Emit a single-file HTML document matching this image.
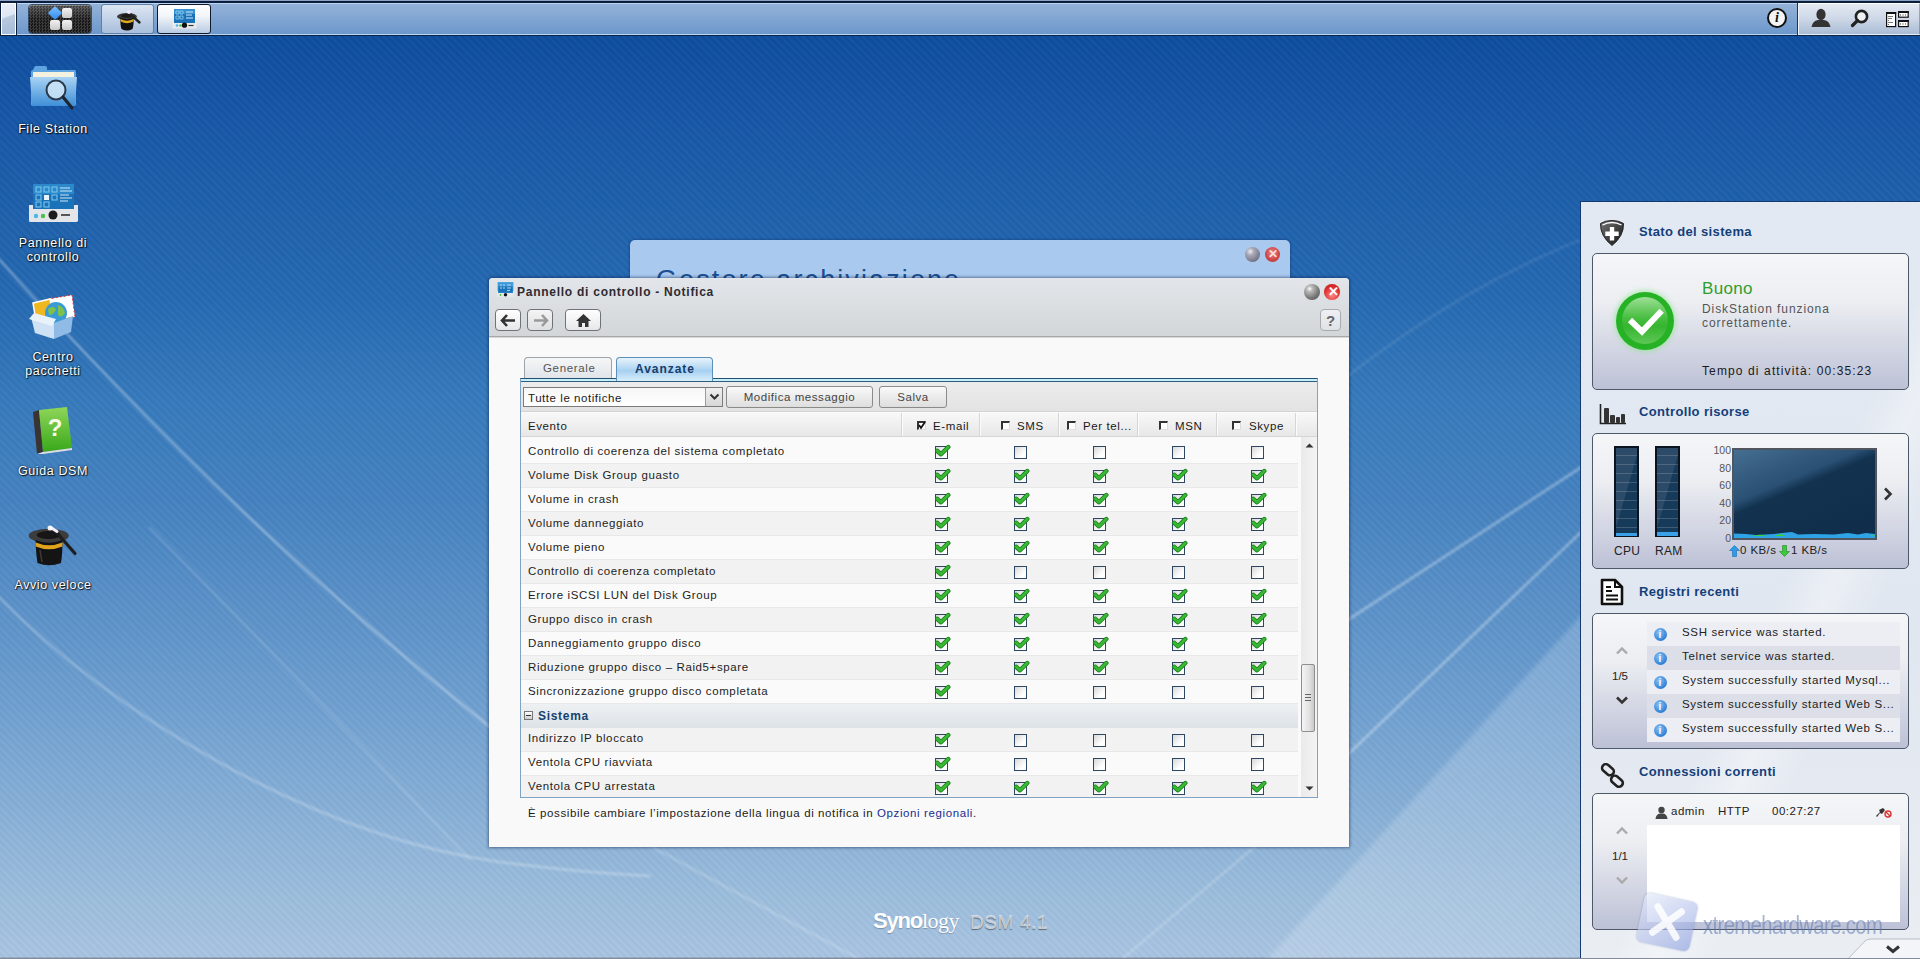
<!DOCTYPE html>
<html><head><meta charset="utf-8">
<style>
*{box-sizing:border-box;margin:0;padding:0}
html,body{width:1920px;height:959px;overflow:hidden}
body{position:relative;font-family:"Liberation Sans",sans-serif;font-size:11px;color:#222;
background:linear-gradient(to bottom,#0b4796 0px,#0d4e9e 36px,#1555a5 100px,#266ab2 300px,#367abc 400px,#4582c0 500px,#6e9fd0 700px,#9dbedd 900px,#a8c4e2 957px,#8390a8 958px);}
.abs{position:absolute}
.stripes{position:absolute;left:0;top:36px;width:1920px;height:923px;
background:repeating-linear-gradient(45deg,rgba(255,255,255,0.03) 0px,rgba(255,255,255,0.02) 2px,rgba(0,0,0,0.02) 3px,rgba(0,0,0,0.028) 5.3px)}
.t{position:absolute;white-space:nowrap}
/* taskbar */
.taskbar{position:absolute;left:0;top:0;width:1920px;height:36px;
background:linear-gradient(to bottom,#8ea3c3 0,#8ea3c3 1px,#0b1e3c 1px,#0b1e3c 3px,#bcd6f5 3px,#bcd6f5 4px,#94b2d8 4px,#6d98cc 34px,#b8d4f2 34px,#b8d4f2 35px,#0b2447 35px,#0b2447 36px)}
.dicon .lbl{position:absolute;left:0;width:104px;text-align:center;color:#fff;font-size:12.5px;line-height:14px;
text-shadow:0 0 2px #000,1px 1px 1px rgba(0,0,0,.8)}
/* dialog */
.dlg{position:absolute;left:489px;top:278px;width:860px;height:569px;border-radius:4px 4px 0 0;
box-shadow:0 0 3px 1px rgba(0,20,60,.45);background:#f9f9f9;overflow:hidden}
.dlg .hdr{position:absolute;left:0;top:0;width:860px;height:59px;background:linear-gradient(to bottom,#e2e6ea,#d2d6d9);border-bottom:1px solid #a8a8a8;box-shadow:0 1px 0 #d8d8d8}
.btn{position:absolute;border:1px solid #6f7378;border-radius:4px;background:linear-gradient(to bottom,#ffffff,#e6e7e9)}
.row{position:absolute;left:0;width:776px;height:24px;border-bottom:1px solid #e9e9e9}
.row .ev{position:absolute;left:7px;top:6px;font-size:11.5px;letter-spacing:0.62px;color:#1d1d1d}
.cb{position:absolute;top:6px;width:13px;height:13px;border:1.4px solid #2e4762;background:linear-gradient(135deg,#d8d8d8,#ffffff 70%)}
.ck{position:absolute;top:3px;width:17px;height:15px}
/* panel */
.panel{position:absolute;left:1580px;top:201px;width:340px;height:758px;background:linear-gradient(to bottom,#e3e9f2,#e1e7f0 60%,#eaeef3);border-left:1px solid #143a70;border-top:1px solid #143a70}
.wbox{position:absolute;left:11px;width:317px;border:1px solid #4d5868;border-radius:5px;background:linear-gradient(to bottom,#f5f6f8 0%,#eceef2 35%,#bdc1d6 100%)}
.whd{position:absolute;left:58px;font-weight:bold;font-size:13px;color:#143f7a;letter-spacing:0.35px}
</style></head><body>
<div class="stripes"></div>
<svg class="abs" style="left:0;top:0" width="1920" height="959" viewBox="0 0 1920 959">
<defs><filter id="bl" x="-5%" y="-5%" width="110%" height="110%"><feGaussianBlur stdDeviation="0.9"/></filter>
<filter id="bl2" x="-10%" y="-10%" width="120%" height="120%"><feGaussianBlur stdDeviation="2"/></filter>
<linearGradient id="lg1" x1="0" y1="0" x2="1" y2="1"><stop offset="0" stop-color="#fff" stop-opacity="0.22"/><stop offset="1" stop-color="#fff" stop-opacity="0.12"/></linearGradient></defs>
<path d="M1262,965 L1580,617 L1600,600 L1600,965 Z" fill="url(#lg1)" filter="url(#bl2)"/>
<g fill="none" stroke="#ffffff" stroke-linecap="round" filter="url(#bl)">
<path d="M-10,249 Q228,518 490,727 L530,760" stroke-width="2.6" stroke-opacity="0.34"/>
<path d="M150,528 Q300,680 470,860" stroke-width="2.5" stroke-opacity="0.13"/>
<path d="M-5,593 C110,712 310,836 500,862 C560,870 610,874 650,876" stroke-width="2.6" stroke-opacity="0.26"/>
<path d="M620,828 L656,849 L870,965" stroke-width="2.4" stroke-opacity="0.2"/>
<path d="M1340,625 L1577,470 L1600,455" stroke-width="2.8" stroke-opacity="0.32"/>
<path d="M1340,762 L1577,536 L1600,514" stroke-width="2.8" stroke-opacity="0.32"/>
<path d="M1345,378 C1420,320 1500,270 1600,232" stroke-width="2.4" stroke-opacity="0.1"/>
<path d="M1290,818 L1252,849 L1115,965" stroke-width="2.4" stroke-opacity="0.2"/>
</g>
</svg>
<div class="taskbar">
 <div class="abs" style="left:0;top:2px;width:17px;height:34px;background:#0b1e3c"></div>
 <div class="abs" style="left:1px;top:3px;width:15px;height:32px;border:1px solid #fff;background:linear-gradient(160deg,#e9eef6 0%,#dfe7f2 40%,#b8c8de 45%,#a6bbd8 100%)"></div>
 <div class="abs" style="left:28px;top:4px;width:64px;height:30px;border-radius:4px;border:1px solid #3b4f6a;background:repeating-conic-gradient(#3a3a3a 0 25%,#151515 0 50%) 0 0/3px 3px;box-shadow:inset 0 1px 0 rgba(255,255,255,.25)">
  <div class="abs" style="left:0;top:0;width:62px;height:14px;background:linear-gradient(to bottom,rgba(255,255,255,.22),rgba(255,255,255,0))"></div>
  <div class="abs" style="left:21px;top:3px;width:10px;height:10px;transform:rotate(45deg);background:linear-gradient(135deg,#7cc0ff,#2f8af0);border-radius:1px"></div>
  <div class="abs" style="left:33px;top:3px;width:10px;height:10px;border-radius:2px;background:linear-gradient(#f2f2f2,#c9c9c9)"></div>
  <div class="abs" style="left:21px;top:15px;width:10px;height:10px;border-radius:2px;background:linear-gradient(#f2f2f2,#c9c9c9)"></div>
  <div class="abs" style="left:33px;top:15px;width:10px;height:10px;border-radius:2px;background:linear-gradient(#f2f2f2,#c9c9c9)"></div>
 </div>
 <div class="abs" style="left:101px;top:4px;width:53px;height:30px;border-radius:3px;border:1px solid #5e7fa8;background:linear-gradient(to bottom,#dce6f2,#a9bfdc)">
  <svg class="abs" style="left:14px;top:3px" width="26" height="24" viewBox="0 0 26 24">
   <ellipse cx="11" cy="8.5" rx="10" ry="3.6" fill="#3a3a3a"/>
   <ellipse cx="11" cy="7.8" rx="6" ry="2" fill="#1a1a1a"/>
   <path d="M4.5,9.5 Q4,17 5.5,21 Q11,24 16.5,21 Q18,17 17.5,9.5 Q11,13 4.5,9.5 Z" fill="#111"/>
   <path d="M4.6,11 Q11,14.5 17.4,11 L17.3,13.5 Q11,17 4.7,13.5 Z" fill="#e0a820"/>
   <path d="M13,5 L23.5,14.5" stroke="#222" stroke-width="2.4" stroke-linecap="round"/>
   <circle cx="13" cy="4" r="2" fill="#f3e9ff"/>
  </svg>
 </div>
 <div class="abs" style="left:157px;top:4px;width:54px;height:30px;border-radius:3px;border:1px solid #0e1a2c;background:linear-gradient(to bottom,#ffffff 0%,#f2f5f9 40%,#b9cbe3 100%)">
  <svg class="abs" style="left:14px;top:3px" width="25" height="22" viewBox="0 0 25 22">
   <rect x="2" y="1" width="21" height="14" fill="#1a73b8"/>
   <rect x="2" y="1" width="21" height="5" fill="#4aa2e0" fill-opacity=".6"/>
   <path d="M4,3 h3 v3 h-3 Z M8,3 h3 v3 h-3 Z M4,8 h3 v3 h-3 Z M8,8 h3 v3 h-3 Z" fill="none" stroke="#8fd0f5" stroke-width=".8"/>
   <path d="M14,4 h7 M14,7 h6 M14,10 h7" stroke="#cfe8f8" stroke-width="1"/>
   <path d="M0.5,13 L2,13 L2,15 L23,15 L23,13 L24.5,13 L24.5,20.5 L0.5,20.5 Z" fill="#e9eaec"/>
   <circle cx="5" cy="17.5" r="1.3" fill="#49b7ea"/><circle cx="8.5" cy="17.5" r="1.3" fill="#4cc04c"/>
   <circle cx="12.5" cy="17.2" r="2.6" fill="#111"/>
   <path d="M16.5,17.5 h5" stroke="#333" stroke-width="1.2"/>
  </svg>
 </div>
 <!-- info -->
 <div class="abs" style="left:1767px;top:8px;width:20px;height:20px;border-radius:50%;border:2.5px solid #111;background:#f4f4f4;text-align:center;font:italic bold 14px/15px 'Liberation Serif',serif;color:#111">i</div>
 <div class="abs" style="left:1797px;top:3px;width:1px;height:32px;background:#1c3558"></div>
 <div class="abs" style="left:1798px;top:3px;width:121px;height:32px;border-top:1px solid #fff;border-bottom:1px solid #e8eef7;border-left:1px solid #f0f4fa;background:linear-gradient(to bottom,#e3e9f2,#cdd7e6 50%,#a9bcd6)">
 </div>
 <svg class="abs" style="left:1810px;top:8px" width="22" height="20" viewBox="0 0 22 20">
  <ellipse cx="11" cy="6.5" rx="4.6" ry="5.8" fill="#333"/>
  <path d="M1.5,19 Q2.5,13 8,12 L14,12 Q19.5,13 20.5,19 Z" fill="#333"/>
 </svg>
 <svg class="abs" style="left:1850px;top:9px" width="20" height="20" viewBox="0 0 20 20">
  <circle cx="11.5" cy="7.5" r="5.6" fill="#eef2f7" stroke="#222" stroke-width="2.6"/>
  <path d="M7.5,11.5 L2.5,16.5" stroke="#222" stroke-width="3.2" stroke-linecap="round"/>
 </svg>
 <svg class="abs" style="left:1885px;top:10px" width="24" height="18" viewBox="0 0 24 18">
  <rect x="1.6" y="2.6" width="9" height="14" fill="#fff" stroke="#111" stroke-width="1.2"/>
  <rect x="1" y="2" width="10.2" height="2" fill="#111"/>
  <path d="M3,6.5 h5 M3,8.5 h4 M3,10.5 h1 M3,12.5 h5 M3,14.5 h1" stroke="#555" stroke-width=".8"/>
  <rect x="13.6" y="1.6" width="9.6" height="5.6" fill="#fff" stroke="#111" stroke-width="1.2"/>
  <rect x="13.6" y="10.6" width="9.6" height="6" fill="#fff" stroke="#111" stroke-width="1.2"/>
  <rect x="13" y="1" width="10.8" height="2" fill="#111"/><rect x="13" y="10" width="10.8" height="2" fill="#111"/>
  <path d="M15,5 h1 M17.5,5 h1 M20,5 h1 M15,14 h1 M17.5,14 h1 M20,14 h1" stroke="#333" stroke-width="1"/>
 </svg>
</div>
<div class="dicon">
 <!-- File Station -->
 <svg class="abs" style="left:28px;top:64px" width="52" height="48" viewBox="0 0 52 48">
  <defs><linearGradient id="fold" x1="0" y1="0" x2="0" y2="1"><stop offset="0" stop-color="#a9d3f5"/><stop offset="1" stop-color="#3f8fd6"/></linearGradient></defs>
  <path d="M6,4 Q6,2 8,2 L17,2 Q19,2 19,4 L19,6 L47,6 Q48,6 48,8 L48,40 Q48,42 46,42 L5,42 Q3,42 3,40 L3,8 Q3,6 5,6 Z" fill="#5fa3e0"/>
  <rect x="5" y="8" width="41" height="6" fill="#f4f1de"/>
  <path d="M2,13 L49,13 L47,42 L4,42 Z" fill="url(#fold)"/>
  <circle cx="28" cy="26" r="9.5" fill="#cfe6f7" fill-opacity="0.85" stroke="#2b3a4a" stroke-width="2"/>
  <path d="M35,33 L44,44" stroke="#1d2630" stroke-width="3.2" stroke-linecap="round"/>
 </svg>
 <div class="lbl t" style="left:1px;top:122px;letter-spacing:0.6px">File Station</div>
 <!-- Pannello -->
 <svg class="abs" style="left:28px;top:183px" width="50" height="40" viewBox="0 0 50 40">
  <rect x="5" y="1" width="41" height="28" fill="#1a73b8"/>
  <rect x="5" y="1" width="41" height="10" fill="#3796d6" fill-opacity=".6"/>
  <g fill="none" stroke="#7fcaf0" stroke-width="1"><rect x="8" y="4" width="5" height="5"/><rect x="16" y="4" width="5" height="5"/><rect x="24" y="4" width="5" height="5"/><rect x="8" y="12" width="5" height="5"/><rect x="24" y="12" width="5" height="5"/><rect x="8" y="19" width="5" height="5"/><rect x="16" y="19" width="5" height="5"/></g>
  <rect x="16" y="12" width="5" height="5" fill="#e8f4fb"/>
  <path d="M32,5 h10 M32,8 h12 M32,12 h9 M32,15 h12 M32,18 h8" stroke="#cfe8f8" stroke-width="1.2"/>
  <path d="M1,22 L5,22 L5,26 L46,26 L46,22 L50,22 L50,38 Q50,39 48,39 L3,39 Q1,39 1,38 Z" fill="#e3e5e8"/>
  <circle cx="8" cy="33" r="2.2" fill="#49b7ea"/><circle cx="15" cy="33" r="2.2" fill="#4cc04c"/>
  <circle cx="25" cy="32" r="4.5" fill="#1b1b1b"/>
  <path d="M33,32 h9" stroke="#333" stroke-width="1.6"/>
 </svg>
 <div class="lbl t" style="left:1px;top:236px;letter-spacing:0.6px">Pannello di</div>
 <div class="lbl t" style="left:1px;top:250px;letter-spacing:0.6px">controllo</div>
 <!-- Centro pacchetti -->
 <svg class="abs" style="left:28px;top:293px" width="50" height="48" viewBox="0 0 50 48">
  <path d="M20,6 L44,2 L47,24 L23,28 Z" fill="#fff" stroke="#d33" stroke-width="1" stroke-dasharray="2 2"/>
  <path d="M5,10 L22,6 L26,30 L9,34 Z" fill="#f0b820" stroke="#fff" stroke-width="1.5"/>
  <circle cx="28" cy="20" r="11" fill="#3a9ad6"/>
  <path d="M20,16 Q25,12 28,16 Q26,22 21,22 Z M30,12 Q36,14 37,20 Q33,26 30,22 Z" fill="#7cc24a"/>
  <path d="M3,24 L26,30 L26,46 L7,40 Z" fill="#cfe2f5"/>
  <path d="M26,30 L45,23 L43,39 L26,46 Z" fill="#8fbbe6"/>
  <path d="M1,26 L24,33 L28,26 L6,20 Z" fill="#e9f2fb"/>
 </svg>
 <div class="lbl t" style="left:1px;top:350px;letter-spacing:0.6px">Centro</div>
 <div class="lbl t" style="left:1px;top:364px;letter-spacing:0.6px">pacchetti</div>
 <!-- Guida DSM -->
 <svg class="abs" style="left:31px;top:406px" width="44" height="50" viewBox="0 0 44 50">
  <defs><linearGradient id="grn" x1="0" y1="0" x2="0" y2="1"><stop offset="0" stop-color="#8fd65a"/><stop offset="1" stop-color="#38a818"/></linearGradient></defs>
  <path d="M2,6 L8,4 L12,46 L6,48 Z" fill="#3a3331"/>
  <path d="M8,4 L36,1 L41,42 L12,46 Z" fill="url(#grn)"/>
  <path d="M6,48 L12,46 L41,42 L41,44 L12,48 Z" fill="#ddd"/>
  <text x="24" y="30" font-family="Liberation Sans" font-weight="bold" font-size="24" fill="#f6fbe8" text-anchor="middle">?</text>
 </svg>
 <div class="lbl t" style="left:1px;top:464px;letter-spacing:0.6px">Guida DSM</div>
 <!-- Avvio veloce -->
 <svg class="abs" style="left:28px;top:524px" width="50" height="44" viewBox="0 0 50 44">
  <ellipse cx="20.7" cy="11.8" rx="20" ry="7" fill="#3c3c3c"/>
  <ellipse cx="20.7" cy="11" rx="12" ry="4" fill="#161616"/>
  <path d="M7.5,16 Q8,30 9.5,39 Q21,43.5 33,39 Q34.5,30 34.5,16 Q21,21 7.5,16 Z" fill="#141414"/>
  <path d="M7.6,18.5 Q21,24 34.4,18.5 L34.4,22.5 Q21,28 7.7,22.5 Z" fill="#e2a31c"/>
  <path d="M12,26 Q13,33 14,38" stroke="#555" stroke-width="1.5" fill="none" stroke-opacity=".6"/>
  <path d="M26,5.5 L47,29.5" stroke="#1e1e1e" stroke-width="3.2" stroke-linecap="round"/>
  <path d="M23,3.5 L29,7.5" stroke="#f3ecff" stroke-width="3" stroke-linecap="round"/>
  <circle cx="22" cy="4" r="2.5" fill="#fff" fill-opacity=".9"/>
 </svg>
 <div class="lbl t" style="left:1px;top:578px;letter-spacing:0.6px">Avvio veloce</div>
</div>
<!-- back window -->
<div class="abs" style="left:630px;top:240px;width:660px;height:60px;border-radius:5px 5px 0 0;background:#a9c9ee;box-shadow:0 0 3px rgba(0,20,60,.5);overflow:hidden">
 <div class="t" style="left:26px;top:25px;font-size:27px;letter-spacing:2.1px;color:#1b4f90">Gestore archiviazione</div>
 <div class="abs" style="left:615px;top:7px;width:15px;height:15px;border-radius:50%;background:radial-gradient(circle at 35% 30%,#eee 0,#aab 25%,#778 70%,#556 100%)"></div>
 <div class="abs" style="left:635px;top:7px;width:15px;height:15px;border-radius:50%;background:radial-gradient(circle at 50% 40%,#e88 0,#c44 60%,#b33 100%)"><span class="t" style="left:3px;top:0px;font:bold 12px/15px Liberation Sans;color:#fbdede">&#x2715;</span></div>
</div>
<div class="dlg">
 <div class="hdr">
  <svg class="abs" style="left:8px;top:4px" width="17" height="16" viewBox="0 0 17 16"><rect x="1" y="0.5" width="15" height="10.5" fill="#1a73b8" stroke="#3b9ddf" stroke-width=".8"/><rect x="1" y="0.5" width="15" height="4" fill="#5ab0ea" fill-opacity=".6"/><path d="M3,3 h2 M6,3 h2 M3,6 h2 M6,6 h2 M10,3 h4 M10,6 h4 M10,8.5 h3" stroke="#bfe3f8" stroke-width=".9"/><path d="M0,9 L1,9 L1,11 L16,11 L16,9 L17,9 L17,15 L0,15 Z" fill="#e6e7e9"/><circle cx="8.5" cy="12.8" r="1.7" fill="#111"/><circle cx="3.5" cy="13" r=".9" fill="#4cc04c"/></svg>
  <div class="t" style="left:28px;top:7px;font-size:12px;font-weight:bold;letter-spacing:0.74px;color:#2e2a33">Pannello di controllo - Notifica</div>
  <div class="abs" style="left:815px;top:6px;width:16px;height:16px;border-radius:50%;background:radial-gradient(circle at 35% 30%,#fff 0,#bbb 18%,#777 60%,#444 100%)"></div>
  <div class="abs" style="left:835px;top:6px;width:16px;height:16px;border-radius:50%;background:radial-gradient(circle at 50% 70%,#f88 0,#d33 55%,#b11 100%);box-shadow:0 0 1px #f99"><span class="t" style="left:3.5px;top:0px;font:bold 13px/16px Liberation Sans;color:#fff">&#x2715;</span></div>
  <div class="btn" style="left:6px;top:31px;width:26px;height:22px"><svg class="abs" style="left:4px;top:4px" width="17" height="13" viewBox="0 0 17 13"><path d="M7,1 L2,6.5 L7,12 M2.5,6.5 L15,6.5" fill="none" stroke="#333" stroke-width="2.6"/></svg></div>
  <div class="btn" style="left:38px;top:31px;width:26px;height:22px;background:linear-gradient(#f4f4f4,#dedfe1)"><svg class="abs" style="left:4px;top:4px" width="17" height="13" viewBox="0 0 17 13"><path d="M10,1 L15,6.5 L10,12 M14.5,6.5 L2,6.5" fill="none" stroke="#9a9a9a" stroke-width="2.6"/></svg></div>
  <div class="btn" style="left:76px;top:31px;width:36px;height:22px"><svg class="abs" style="left:9px;top:3px" width="17" height="15" viewBox="0 0 17 15"><path d="M8.5,1 L1,8 L3.5,8 L3.5,14 L7,14 L7,10 L10,10 L10,14 L13.5,14 L13.5,8 L16,8 Z" fill="#333"/></svg></div>
  <div class="btn" style="left:831px;top:31px;width:21px;height:22px;border-color:#a8abb0;background:linear-gradient(#eef0f3,#dfe2e6)"><span class="t" style="left:5px;top:2px;font:bold 15px/18px Liberation Sans;color:#666">?</span></div>
 </div>
 <div class="abs" style="left:35px;top:79px;width:88px;height:22px;border:1px solid #9ea3a9;border-bottom:none;border-radius:4px 4px 0 0;background:linear-gradient(#f6f6f6,#dfe4ea)"><span class="t" style="left:18px;top:4px;font-size:11.5px;letter-spacing:0.65px;color:#555">Generale</span></div>
 <div class="abs" style="left:127px;top:79px;width:97px;height:24px;border:1px solid #5b90bb;border-bottom:none;border-radius:4px 4px 0 0;background:linear-gradient(#e8f3fb 0%,#b4d8f3 45%,#a6d0f0 55%,#d9eefc 100%);z-index:2"><span class="t" style="left:18px;top:4px;font-size:12px;font-weight:bold;letter-spacing:0.95px;color:#163d6c">Avanzate</span></div>
 <div class="abs" style="left:31px;top:100px;width:798px;height:420px;border:1px solid #7fa3c0;border-top:1px solid #24506f;background:#fafafa;overflow:hidden">
  <div class="abs" style="left:0;top:0;width:796px;height:2px;background:#c6eefb"></div><div class="abs" style="left:0;top:2px;width:796px;height:1px;background:#2f5d7d"></div>
  <div class="abs" style="left:0;top:3px;width:796px;height:30px;background:linear-gradient(#ececec,#e3e3e3);border-bottom:1px solid #d3d3d3"></div>
  <div class="abs" style="left:2px;top:8px;width:200px;height:20px;border:1px solid #7b7b7b;background:linear-gradient(#f6f6f6,#ffffff)"><span class="t" style="left:4px;top:4px;font-size:11.5px;letter-spacing:0.55px;color:#1a1a1a">Tutte le notifiche</span>
   <div class="abs" style="left:181px;top:0;width:17px;height:18px;border-left:1px solid #9a9a9a;background:linear-gradient(#f0f0f0,#d7d7d7)"><svg class="abs" style="left:3px;top:5px" width="11" height="8" viewBox="0 0 11 8"><path d="M1.5,1.5 L5.5,5.5 L9.5,1.5" fill="none" stroke="#333" stroke-width="2"/></svg></div></div>
  <div class="btn" style="left:205px;top:7px;width:147px;height:22px;border-color:#8a8a8a;border-radius:3px;background:linear-gradient(#f9f9f9,#dedede)"><span class="t" style="left:0;width:145px;text-align:center;top:4px;font-size:11.5px;letter-spacing:0.55px;color:#444">Modifica messaggio</span></div>
  <div class="btn" style="left:358px;top:7px;width:68px;height:22px;border-color:#8a8a8a;border-radius:3px;background:linear-gradient(#f9f9f9,#dedede)"><span class="t" style="left:0;width:66px;text-align:center;top:4px;font-size:11.5px;letter-spacing:0.55px;color:#444">Salva</span></div>
  <div class="abs" style="left:0;top:34px;width:796px;height:24px;background:linear-gradient(#f8f8f8,#e7e7e7);border-bottom:1px solid #d5d5d5"></div>
  <span class="t" style="left:7px;top:41px;font-size:11.5px;letter-spacing:0.6px;color:#1a1a1a">Evento</span>
  <div class="abs" style="left:380px;top:34px;width:1px;height:23px;background:#d6d6d6;box-shadow:1px 0 0 #fbfbfb"></div>
  <div class="abs" style="left:458px;top:34px;width:1px;height:23px;background:#d6d6d6;box-shadow:1px 0 0 #fbfbfb"></div>
  <div class="abs" style="left:537px;top:34px;width:1px;height:23px;background:#d6d6d6;box-shadow:1px 0 0 #fbfbfb"></div>
  <div class="abs" style="left:616px;top:34px;width:1px;height:23px;background:#d6d6d6;box-shadow:1px 0 0 #fbfbfb"></div>
  <div class="abs" style="left:695px;top:34px;width:1px;height:23px;background:#d6d6d6;box-shadow:1px 0 0 #fbfbfb"></div>
  <div class="abs" style="left:774px;top:34px;width:1px;height:23px;background:#d6d6d6;box-shadow:1px 0 0 #fbfbfb"></div>
  <div class="abs" style="left:396px;top:42px;width:9px;height:9px;border-top:2px solid #333;border-left:2px solid #333;border-right:1px solid #ddd;border-bottom:1px solid #ddd;background:#fff"></div>
  <svg class="abs" style="left:396px;top:42px" width="9" height="9" viewBox="0 0 9 9"><path d="M2,4 L4,7 L8,1" fill="none" stroke="#111" stroke-width="1.8"/></svg>
  <span class="t" style="left:412px;top:41px;font-size:11.5px;letter-spacing:0.6px;color:#1a1a1a">E-mail</span>
  <div class="abs" style="left:480px;top:42px;width:9px;height:9px;border-top:2px solid #333;border-left:2px solid #333;border-right:1px solid #ddd;border-bottom:1px solid #ddd;background:#fff"></div>
  <span class="t" style="left:496px;top:41px;font-size:11.5px;letter-spacing:0.6px;color:#1a1a1a">SMS</span>
  <div class="abs" style="left:546px;top:42px;width:9px;height:9px;border-top:2px solid #333;border-left:2px solid #333;border-right:1px solid #ddd;border-bottom:1px solid #ddd;background:#fff"></div>
  <span class="t" style="left:562px;top:41px;font-size:11.5px;letter-spacing:0.6px;color:#1a1a1a">Per tel...</span>
  <div class="abs" style="left:638px;top:42px;width:9px;height:9px;border-top:2px solid #333;border-left:2px solid #333;border-right:1px solid #ddd;border-bottom:1px solid #ddd;background:#fff"></div>
  <span class="t" style="left:654px;top:41px;font-size:11.5px;letter-spacing:0.6px;color:#1a1a1a">MSN</span>
  <div class="abs" style="left:711px;top:42px;width:9px;height:9px;border-top:2px solid #333;border-left:2px solid #333;border-right:1px solid #ddd;border-bottom:1px solid #ddd;background:#fff"></div>
  <span class="t" style="left:728px;top:41px;font-size:11.5px;letter-spacing:0.6px;color:#1a1a1a">Skype</span>
  <div class="abs" style="left:0;top:61px;width:777px;height:24px;background:#fafafa;border-bottom:1px solid #e8e8e8"></div>
  <span class="t" style="left:7px;top:66px;font-size:11.5px;letter-spacing:0.62px;color:#1d1d1d">Controllo di coerenza del sistema completato</span>
  <div class="cb" style="left:414px;top:67px"></div>
  <svg class="abs" style="left:413px;top:65px" width="18" height="15" viewBox="0 0 18 15"><path d="M3.2,6.8 L7,10.3 L14.3,3" fill="none" stroke="#1a7d1a" stroke-width="4.4" stroke-linecap="round" stroke-linejoin="round"/><path d="M3.2,6.8 L7,10.3 L14.3,3" fill="none" stroke="#38b834" stroke-width="2.8" stroke-linecap="round" stroke-linejoin="round"/></svg>
  <div class="cb" style="left:493px;top:67px"></div>
  <div class="cb" style="left:572px;top:67px"></div>
  <div class="cb" style="left:651px;top:67px"></div>
  <div class="cb" style="left:730px;top:67px"></div>
  <div class="abs" style="left:0;top:85px;width:777px;height:24px;background:#f2f2f2;border-bottom:1px solid #e8e8e8"></div>
  <span class="t" style="left:7px;top:90px;font-size:11.5px;letter-spacing:0.62px;color:#1d1d1d">Volume Disk Group guasto</span>
  <div class="cb" style="left:414px;top:91px"></div>
  <svg class="abs" style="left:413px;top:89px" width="18" height="15" viewBox="0 0 18 15"><path d="M3.2,6.8 L7,10.3 L14.3,3" fill="none" stroke="#1a7d1a" stroke-width="4.4" stroke-linecap="round" stroke-linejoin="round"/><path d="M3.2,6.8 L7,10.3 L14.3,3" fill="none" stroke="#38b834" stroke-width="2.8" stroke-linecap="round" stroke-linejoin="round"/></svg>
  <div class="cb" style="left:493px;top:91px"></div>
  <svg class="abs" style="left:492px;top:89px" width="18" height="15" viewBox="0 0 18 15"><path d="M3.2,6.8 L7,10.3 L14.3,3" fill="none" stroke="#1a7d1a" stroke-width="4.4" stroke-linecap="round" stroke-linejoin="round"/><path d="M3.2,6.8 L7,10.3 L14.3,3" fill="none" stroke="#38b834" stroke-width="2.8" stroke-linecap="round" stroke-linejoin="round"/></svg>
  <div class="cb" style="left:572px;top:91px"></div>
  <svg class="abs" style="left:571px;top:89px" width="18" height="15" viewBox="0 0 18 15"><path d="M3.2,6.8 L7,10.3 L14.3,3" fill="none" stroke="#1a7d1a" stroke-width="4.4" stroke-linecap="round" stroke-linejoin="round"/><path d="M3.2,6.8 L7,10.3 L14.3,3" fill="none" stroke="#38b834" stroke-width="2.8" stroke-linecap="round" stroke-linejoin="round"/></svg>
  <div class="cb" style="left:651px;top:91px"></div>
  <svg class="abs" style="left:650px;top:89px" width="18" height="15" viewBox="0 0 18 15"><path d="M3.2,6.8 L7,10.3 L14.3,3" fill="none" stroke="#1a7d1a" stroke-width="4.4" stroke-linecap="round" stroke-linejoin="round"/><path d="M3.2,6.8 L7,10.3 L14.3,3" fill="none" stroke="#38b834" stroke-width="2.8" stroke-linecap="round" stroke-linejoin="round"/></svg>
  <div class="cb" style="left:730px;top:91px"></div>
  <svg class="abs" style="left:729px;top:89px" width="18" height="15" viewBox="0 0 18 15"><path d="M3.2,6.8 L7,10.3 L14.3,3" fill="none" stroke="#1a7d1a" stroke-width="4.4" stroke-linecap="round" stroke-linejoin="round"/><path d="M3.2,6.8 L7,10.3 L14.3,3" fill="none" stroke="#38b834" stroke-width="2.8" stroke-linecap="round" stroke-linejoin="round"/></svg>
  <div class="abs" style="left:0;top:109px;width:777px;height:24px;background:#fafafa;border-bottom:1px solid #e8e8e8"></div>
  <span class="t" style="left:7px;top:114px;font-size:11.5px;letter-spacing:0.62px;color:#1d1d1d">Volume in crash</span>
  <div class="cb" style="left:414px;top:115px"></div>
  <svg class="abs" style="left:413px;top:113px" width="18" height="15" viewBox="0 0 18 15"><path d="M3.2,6.8 L7,10.3 L14.3,3" fill="none" stroke="#1a7d1a" stroke-width="4.4" stroke-linecap="round" stroke-linejoin="round"/><path d="M3.2,6.8 L7,10.3 L14.3,3" fill="none" stroke="#38b834" stroke-width="2.8" stroke-linecap="round" stroke-linejoin="round"/></svg>
  <div class="cb" style="left:493px;top:115px"></div>
  <svg class="abs" style="left:492px;top:113px" width="18" height="15" viewBox="0 0 18 15"><path d="M3.2,6.8 L7,10.3 L14.3,3" fill="none" stroke="#1a7d1a" stroke-width="4.4" stroke-linecap="round" stroke-linejoin="round"/><path d="M3.2,6.8 L7,10.3 L14.3,3" fill="none" stroke="#38b834" stroke-width="2.8" stroke-linecap="round" stroke-linejoin="round"/></svg>
  <div class="cb" style="left:572px;top:115px"></div>
  <svg class="abs" style="left:571px;top:113px" width="18" height="15" viewBox="0 0 18 15"><path d="M3.2,6.8 L7,10.3 L14.3,3" fill="none" stroke="#1a7d1a" stroke-width="4.4" stroke-linecap="round" stroke-linejoin="round"/><path d="M3.2,6.8 L7,10.3 L14.3,3" fill="none" stroke="#38b834" stroke-width="2.8" stroke-linecap="round" stroke-linejoin="round"/></svg>
  <div class="cb" style="left:651px;top:115px"></div>
  <svg class="abs" style="left:650px;top:113px" width="18" height="15" viewBox="0 0 18 15"><path d="M3.2,6.8 L7,10.3 L14.3,3" fill="none" stroke="#1a7d1a" stroke-width="4.4" stroke-linecap="round" stroke-linejoin="round"/><path d="M3.2,6.8 L7,10.3 L14.3,3" fill="none" stroke="#38b834" stroke-width="2.8" stroke-linecap="round" stroke-linejoin="round"/></svg>
  <div class="cb" style="left:730px;top:115px"></div>
  <svg class="abs" style="left:729px;top:113px" width="18" height="15" viewBox="0 0 18 15"><path d="M3.2,6.8 L7,10.3 L14.3,3" fill="none" stroke="#1a7d1a" stroke-width="4.4" stroke-linecap="round" stroke-linejoin="round"/><path d="M3.2,6.8 L7,10.3 L14.3,3" fill="none" stroke="#38b834" stroke-width="2.8" stroke-linecap="round" stroke-linejoin="round"/></svg>
  <div class="abs" style="left:0;top:133px;width:777px;height:24px;background:#f2f2f2;border-bottom:1px solid #e8e8e8"></div>
  <span class="t" style="left:7px;top:138px;font-size:11.5px;letter-spacing:0.62px;color:#1d1d1d">Volume danneggiato</span>
  <div class="cb" style="left:414px;top:139px"></div>
  <svg class="abs" style="left:413px;top:137px" width="18" height="15" viewBox="0 0 18 15"><path d="M3.2,6.8 L7,10.3 L14.3,3" fill="none" stroke="#1a7d1a" stroke-width="4.4" stroke-linecap="round" stroke-linejoin="round"/><path d="M3.2,6.8 L7,10.3 L14.3,3" fill="none" stroke="#38b834" stroke-width="2.8" stroke-linecap="round" stroke-linejoin="round"/></svg>
  <div class="cb" style="left:493px;top:139px"></div>
  <svg class="abs" style="left:492px;top:137px" width="18" height="15" viewBox="0 0 18 15"><path d="M3.2,6.8 L7,10.3 L14.3,3" fill="none" stroke="#1a7d1a" stroke-width="4.4" stroke-linecap="round" stroke-linejoin="round"/><path d="M3.2,6.8 L7,10.3 L14.3,3" fill="none" stroke="#38b834" stroke-width="2.8" stroke-linecap="round" stroke-linejoin="round"/></svg>
  <div class="cb" style="left:572px;top:139px"></div>
  <svg class="abs" style="left:571px;top:137px" width="18" height="15" viewBox="0 0 18 15"><path d="M3.2,6.8 L7,10.3 L14.3,3" fill="none" stroke="#1a7d1a" stroke-width="4.4" stroke-linecap="round" stroke-linejoin="round"/><path d="M3.2,6.8 L7,10.3 L14.3,3" fill="none" stroke="#38b834" stroke-width="2.8" stroke-linecap="round" stroke-linejoin="round"/></svg>
  <div class="cb" style="left:651px;top:139px"></div>
  <svg class="abs" style="left:650px;top:137px" width="18" height="15" viewBox="0 0 18 15"><path d="M3.2,6.8 L7,10.3 L14.3,3" fill="none" stroke="#1a7d1a" stroke-width="4.4" stroke-linecap="round" stroke-linejoin="round"/><path d="M3.2,6.8 L7,10.3 L14.3,3" fill="none" stroke="#38b834" stroke-width="2.8" stroke-linecap="round" stroke-linejoin="round"/></svg>
  <div class="cb" style="left:730px;top:139px"></div>
  <svg class="abs" style="left:729px;top:137px" width="18" height="15" viewBox="0 0 18 15"><path d="M3.2,6.8 L7,10.3 L14.3,3" fill="none" stroke="#1a7d1a" stroke-width="4.4" stroke-linecap="round" stroke-linejoin="round"/><path d="M3.2,6.8 L7,10.3 L14.3,3" fill="none" stroke="#38b834" stroke-width="2.8" stroke-linecap="round" stroke-linejoin="round"/></svg>
  <div class="abs" style="left:0;top:157px;width:777px;height:24px;background:#fafafa;border-bottom:1px solid #e8e8e8"></div>
  <span class="t" style="left:7px;top:162px;font-size:11.5px;letter-spacing:0.62px;color:#1d1d1d">Volume pieno</span>
  <div class="cb" style="left:414px;top:163px"></div>
  <svg class="abs" style="left:413px;top:161px" width="18" height="15" viewBox="0 0 18 15"><path d="M3.2,6.8 L7,10.3 L14.3,3" fill="none" stroke="#1a7d1a" stroke-width="4.4" stroke-linecap="round" stroke-linejoin="round"/><path d="M3.2,6.8 L7,10.3 L14.3,3" fill="none" stroke="#38b834" stroke-width="2.8" stroke-linecap="round" stroke-linejoin="round"/></svg>
  <div class="cb" style="left:493px;top:163px"></div>
  <svg class="abs" style="left:492px;top:161px" width="18" height="15" viewBox="0 0 18 15"><path d="M3.2,6.8 L7,10.3 L14.3,3" fill="none" stroke="#1a7d1a" stroke-width="4.4" stroke-linecap="round" stroke-linejoin="round"/><path d="M3.2,6.8 L7,10.3 L14.3,3" fill="none" stroke="#38b834" stroke-width="2.8" stroke-linecap="round" stroke-linejoin="round"/></svg>
  <div class="cb" style="left:572px;top:163px"></div>
  <svg class="abs" style="left:571px;top:161px" width="18" height="15" viewBox="0 0 18 15"><path d="M3.2,6.8 L7,10.3 L14.3,3" fill="none" stroke="#1a7d1a" stroke-width="4.4" stroke-linecap="round" stroke-linejoin="round"/><path d="M3.2,6.8 L7,10.3 L14.3,3" fill="none" stroke="#38b834" stroke-width="2.8" stroke-linecap="round" stroke-linejoin="round"/></svg>
  <div class="cb" style="left:651px;top:163px"></div>
  <svg class="abs" style="left:650px;top:161px" width="18" height="15" viewBox="0 0 18 15"><path d="M3.2,6.8 L7,10.3 L14.3,3" fill="none" stroke="#1a7d1a" stroke-width="4.4" stroke-linecap="round" stroke-linejoin="round"/><path d="M3.2,6.8 L7,10.3 L14.3,3" fill="none" stroke="#38b834" stroke-width="2.8" stroke-linecap="round" stroke-linejoin="round"/></svg>
  <div class="cb" style="left:730px;top:163px"></div>
  <svg class="abs" style="left:729px;top:161px" width="18" height="15" viewBox="0 0 18 15"><path d="M3.2,6.8 L7,10.3 L14.3,3" fill="none" stroke="#1a7d1a" stroke-width="4.4" stroke-linecap="round" stroke-linejoin="round"/><path d="M3.2,6.8 L7,10.3 L14.3,3" fill="none" stroke="#38b834" stroke-width="2.8" stroke-linecap="round" stroke-linejoin="round"/></svg>
  <div class="abs" style="left:0;top:181px;width:777px;height:24px;background:#f2f2f2;border-bottom:1px solid #e8e8e8"></div>
  <span class="t" style="left:7px;top:186px;font-size:11.5px;letter-spacing:0.62px;color:#1d1d1d">Controllo di coerenza completato</span>
  <div class="cb" style="left:414px;top:187px"></div>
  <svg class="abs" style="left:413px;top:185px" width="18" height="15" viewBox="0 0 18 15"><path d="M3.2,6.8 L7,10.3 L14.3,3" fill="none" stroke="#1a7d1a" stroke-width="4.4" stroke-linecap="round" stroke-linejoin="round"/><path d="M3.2,6.8 L7,10.3 L14.3,3" fill="none" stroke="#38b834" stroke-width="2.8" stroke-linecap="round" stroke-linejoin="round"/></svg>
  <div class="cb" style="left:493px;top:187px"></div>
  <div class="cb" style="left:572px;top:187px"></div>
  <div class="cb" style="left:651px;top:187px"></div>
  <div class="cb" style="left:730px;top:187px"></div>
  <div class="abs" style="left:0;top:205px;width:777px;height:24px;background:#fafafa;border-bottom:1px solid #e8e8e8"></div>
  <span class="t" style="left:7px;top:210px;font-size:11.5px;letter-spacing:0.62px;color:#1d1d1d">Errore iSCSI LUN del Disk Group</span>
  <div class="cb" style="left:414px;top:211px"></div>
  <svg class="abs" style="left:413px;top:209px" width="18" height="15" viewBox="0 0 18 15"><path d="M3.2,6.8 L7,10.3 L14.3,3" fill="none" stroke="#1a7d1a" stroke-width="4.4" stroke-linecap="round" stroke-linejoin="round"/><path d="M3.2,6.8 L7,10.3 L14.3,3" fill="none" stroke="#38b834" stroke-width="2.8" stroke-linecap="round" stroke-linejoin="round"/></svg>
  <div class="cb" style="left:493px;top:211px"></div>
  <svg class="abs" style="left:492px;top:209px" width="18" height="15" viewBox="0 0 18 15"><path d="M3.2,6.8 L7,10.3 L14.3,3" fill="none" stroke="#1a7d1a" stroke-width="4.4" stroke-linecap="round" stroke-linejoin="round"/><path d="M3.2,6.8 L7,10.3 L14.3,3" fill="none" stroke="#38b834" stroke-width="2.8" stroke-linecap="round" stroke-linejoin="round"/></svg>
  <div class="cb" style="left:572px;top:211px"></div>
  <svg class="abs" style="left:571px;top:209px" width="18" height="15" viewBox="0 0 18 15"><path d="M3.2,6.8 L7,10.3 L14.3,3" fill="none" stroke="#1a7d1a" stroke-width="4.4" stroke-linecap="round" stroke-linejoin="round"/><path d="M3.2,6.8 L7,10.3 L14.3,3" fill="none" stroke="#38b834" stroke-width="2.8" stroke-linecap="round" stroke-linejoin="round"/></svg>
  <div class="cb" style="left:651px;top:211px"></div>
  <svg class="abs" style="left:650px;top:209px" width="18" height="15" viewBox="0 0 18 15"><path d="M3.2,6.8 L7,10.3 L14.3,3" fill="none" stroke="#1a7d1a" stroke-width="4.4" stroke-linecap="round" stroke-linejoin="round"/><path d="M3.2,6.8 L7,10.3 L14.3,3" fill="none" stroke="#38b834" stroke-width="2.8" stroke-linecap="round" stroke-linejoin="round"/></svg>
  <div class="cb" style="left:730px;top:211px"></div>
  <svg class="abs" style="left:729px;top:209px" width="18" height="15" viewBox="0 0 18 15"><path d="M3.2,6.8 L7,10.3 L14.3,3" fill="none" stroke="#1a7d1a" stroke-width="4.4" stroke-linecap="round" stroke-linejoin="round"/><path d="M3.2,6.8 L7,10.3 L14.3,3" fill="none" stroke="#38b834" stroke-width="2.8" stroke-linecap="round" stroke-linejoin="round"/></svg>
  <div class="abs" style="left:0;top:229px;width:777px;height:24px;background:#f2f2f2;border-bottom:1px solid #e8e8e8"></div>
  <span class="t" style="left:7px;top:234px;font-size:11.5px;letter-spacing:0.62px;color:#1d1d1d">Gruppo disco in crash</span>
  <div class="cb" style="left:414px;top:235px"></div>
  <svg class="abs" style="left:413px;top:233px" width="18" height="15" viewBox="0 0 18 15"><path d="M3.2,6.8 L7,10.3 L14.3,3" fill="none" stroke="#1a7d1a" stroke-width="4.4" stroke-linecap="round" stroke-linejoin="round"/><path d="M3.2,6.8 L7,10.3 L14.3,3" fill="none" stroke="#38b834" stroke-width="2.8" stroke-linecap="round" stroke-linejoin="round"/></svg>
  <div class="cb" style="left:493px;top:235px"></div>
  <svg class="abs" style="left:492px;top:233px" width="18" height="15" viewBox="0 0 18 15"><path d="M3.2,6.8 L7,10.3 L14.3,3" fill="none" stroke="#1a7d1a" stroke-width="4.4" stroke-linecap="round" stroke-linejoin="round"/><path d="M3.2,6.8 L7,10.3 L14.3,3" fill="none" stroke="#38b834" stroke-width="2.8" stroke-linecap="round" stroke-linejoin="round"/></svg>
  <div class="cb" style="left:572px;top:235px"></div>
  <svg class="abs" style="left:571px;top:233px" width="18" height="15" viewBox="0 0 18 15"><path d="M3.2,6.8 L7,10.3 L14.3,3" fill="none" stroke="#1a7d1a" stroke-width="4.4" stroke-linecap="round" stroke-linejoin="round"/><path d="M3.2,6.8 L7,10.3 L14.3,3" fill="none" stroke="#38b834" stroke-width="2.8" stroke-linecap="round" stroke-linejoin="round"/></svg>
  <div class="cb" style="left:651px;top:235px"></div>
  <svg class="abs" style="left:650px;top:233px" width="18" height="15" viewBox="0 0 18 15"><path d="M3.2,6.8 L7,10.3 L14.3,3" fill="none" stroke="#1a7d1a" stroke-width="4.4" stroke-linecap="round" stroke-linejoin="round"/><path d="M3.2,6.8 L7,10.3 L14.3,3" fill="none" stroke="#38b834" stroke-width="2.8" stroke-linecap="round" stroke-linejoin="round"/></svg>
  <div class="cb" style="left:730px;top:235px"></div>
  <svg class="abs" style="left:729px;top:233px" width="18" height="15" viewBox="0 0 18 15"><path d="M3.2,6.8 L7,10.3 L14.3,3" fill="none" stroke="#1a7d1a" stroke-width="4.4" stroke-linecap="round" stroke-linejoin="round"/><path d="M3.2,6.8 L7,10.3 L14.3,3" fill="none" stroke="#38b834" stroke-width="2.8" stroke-linecap="round" stroke-linejoin="round"/></svg>
  <div class="abs" style="left:0;top:253px;width:777px;height:24px;background:#fafafa;border-bottom:1px solid #e8e8e8"></div>
  <span class="t" style="left:7px;top:258px;font-size:11.5px;letter-spacing:0.62px;color:#1d1d1d">Danneggiamento gruppo disco</span>
  <div class="cb" style="left:414px;top:259px"></div>
  <svg class="abs" style="left:413px;top:257px" width="18" height="15" viewBox="0 0 18 15"><path d="M3.2,6.8 L7,10.3 L14.3,3" fill="none" stroke="#1a7d1a" stroke-width="4.4" stroke-linecap="round" stroke-linejoin="round"/><path d="M3.2,6.8 L7,10.3 L14.3,3" fill="none" stroke="#38b834" stroke-width="2.8" stroke-linecap="round" stroke-linejoin="round"/></svg>
  <div class="cb" style="left:493px;top:259px"></div>
  <svg class="abs" style="left:492px;top:257px" width="18" height="15" viewBox="0 0 18 15"><path d="M3.2,6.8 L7,10.3 L14.3,3" fill="none" stroke="#1a7d1a" stroke-width="4.4" stroke-linecap="round" stroke-linejoin="round"/><path d="M3.2,6.8 L7,10.3 L14.3,3" fill="none" stroke="#38b834" stroke-width="2.8" stroke-linecap="round" stroke-linejoin="round"/></svg>
  <div class="cb" style="left:572px;top:259px"></div>
  <svg class="abs" style="left:571px;top:257px" width="18" height="15" viewBox="0 0 18 15"><path d="M3.2,6.8 L7,10.3 L14.3,3" fill="none" stroke="#1a7d1a" stroke-width="4.4" stroke-linecap="round" stroke-linejoin="round"/><path d="M3.2,6.8 L7,10.3 L14.3,3" fill="none" stroke="#38b834" stroke-width="2.8" stroke-linecap="round" stroke-linejoin="round"/></svg>
  <div class="cb" style="left:651px;top:259px"></div>
  <svg class="abs" style="left:650px;top:257px" width="18" height="15" viewBox="0 0 18 15"><path d="M3.2,6.8 L7,10.3 L14.3,3" fill="none" stroke="#1a7d1a" stroke-width="4.4" stroke-linecap="round" stroke-linejoin="round"/><path d="M3.2,6.8 L7,10.3 L14.3,3" fill="none" stroke="#38b834" stroke-width="2.8" stroke-linecap="round" stroke-linejoin="round"/></svg>
  <div class="cb" style="left:730px;top:259px"></div>
  <svg class="abs" style="left:729px;top:257px" width="18" height="15" viewBox="0 0 18 15"><path d="M3.2,6.8 L7,10.3 L14.3,3" fill="none" stroke="#1a7d1a" stroke-width="4.4" stroke-linecap="round" stroke-linejoin="round"/><path d="M3.2,6.8 L7,10.3 L14.3,3" fill="none" stroke="#38b834" stroke-width="2.8" stroke-linecap="round" stroke-linejoin="round"/></svg>
  <div class="abs" style="left:0;top:277px;width:777px;height:24px;background:#f2f2f2;border-bottom:1px solid #e8e8e8"></div>
  <span class="t" style="left:7px;top:282px;font-size:11.5px;letter-spacing:0.62px;color:#1d1d1d">Riduzione gruppo disco &ndash; Raid5+spare</span>
  <div class="cb" style="left:414px;top:283px"></div>
  <svg class="abs" style="left:413px;top:281px" width="18" height="15" viewBox="0 0 18 15"><path d="M3.2,6.8 L7,10.3 L14.3,3" fill="none" stroke="#1a7d1a" stroke-width="4.4" stroke-linecap="round" stroke-linejoin="round"/><path d="M3.2,6.8 L7,10.3 L14.3,3" fill="none" stroke="#38b834" stroke-width="2.8" stroke-linecap="round" stroke-linejoin="round"/></svg>
  <div class="cb" style="left:493px;top:283px"></div>
  <svg class="abs" style="left:492px;top:281px" width="18" height="15" viewBox="0 0 18 15"><path d="M3.2,6.8 L7,10.3 L14.3,3" fill="none" stroke="#1a7d1a" stroke-width="4.4" stroke-linecap="round" stroke-linejoin="round"/><path d="M3.2,6.8 L7,10.3 L14.3,3" fill="none" stroke="#38b834" stroke-width="2.8" stroke-linecap="round" stroke-linejoin="round"/></svg>
  <div class="cb" style="left:572px;top:283px"></div>
  <svg class="abs" style="left:571px;top:281px" width="18" height="15" viewBox="0 0 18 15"><path d="M3.2,6.8 L7,10.3 L14.3,3" fill="none" stroke="#1a7d1a" stroke-width="4.4" stroke-linecap="round" stroke-linejoin="round"/><path d="M3.2,6.8 L7,10.3 L14.3,3" fill="none" stroke="#38b834" stroke-width="2.8" stroke-linecap="round" stroke-linejoin="round"/></svg>
  <div class="cb" style="left:651px;top:283px"></div>
  <svg class="abs" style="left:650px;top:281px" width="18" height="15" viewBox="0 0 18 15"><path d="M3.2,6.8 L7,10.3 L14.3,3" fill="none" stroke="#1a7d1a" stroke-width="4.4" stroke-linecap="round" stroke-linejoin="round"/><path d="M3.2,6.8 L7,10.3 L14.3,3" fill="none" stroke="#38b834" stroke-width="2.8" stroke-linecap="round" stroke-linejoin="round"/></svg>
  <div class="cb" style="left:730px;top:283px"></div>
  <svg class="abs" style="left:729px;top:281px" width="18" height="15" viewBox="0 0 18 15"><path d="M3.2,6.8 L7,10.3 L14.3,3" fill="none" stroke="#1a7d1a" stroke-width="4.4" stroke-linecap="round" stroke-linejoin="round"/><path d="M3.2,6.8 L7,10.3 L14.3,3" fill="none" stroke="#38b834" stroke-width="2.8" stroke-linecap="round" stroke-linejoin="round"/></svg>
  <div class="abs" style="left:0;top:301px;width:777px;height:24px;background:#fafafa;border-bottom:1px solid #e8e8e8"></div>
  <span class="t" style="left:7px;top:306px;font-size:11.5px;letter-spacing:0.62px;color:#1d1d1d">Sincronizzazione gruppo disco completata</span>
  <div class="cb" style="left:414px;top:307px"></div>
  <svg class="abs" style="left:413px;top:305px" width="18" height="15" viewBox="0 0 18 15"><path d="M3.2,6.8 L7,10.3 L14.3,3" fill="none" stroke="#1a7d1a" stroke-width="4.4" stroke-linecap="round" stroke-linejoin="round"/><path d="M3.2,6.8 L7,10.3 L14.3,3" fill="none" stroke="#38b834" stroke-width="2.8" stroke-linecap="round" stroke-linejoin="round"/></svg>
  <div class="cb" style="left:493px;top:307px"></div>
  <div class="cb" style="left:572px;top:307px"></div>
  <div class="cb" style="left:651px;top:307px"></div>
  <div class="cb" style="left:730px;top:307px"></div>
  <div class="abs" style="left:0;top:325px;width:777px;height:24px;background:linear-gradient(#eef1f4,#dde2e7)"></div>
  <div class="abs" style="left:3px;top:332px;width:9px;height:9px;border:1px solid #777;background:linear-gradient(#fff,#ccc)"><div class="abs" style="left:1px;top:3px;width:5px;height:1px;background:#333"></div></div>
  <span class="t" style="left:17px;top:330px;font-size:12px;font-weight:bold;letter-spacing:0.7px;color:#16416f">Sistema</span>
  <div class="abs" style="left:0;top:349px;width:777px;height:24px;background:#f2f2f2;border-bottom:1px solid #e8e8e8"></div>
  <span class="t" style="left:7px;top:353px;font-size:11.5px;letter-spacing:0.62px;color:#1d1d1d">Indirizzo IP bloccato</span>
  <div class="cb" style="left:414px;top:355px"></div>
  <svg class="abs" style="left:413px;top:353px" width="18" height="15" viewBox="0 0 18 15"><path d="M3.2,6.8 L7,10.3 L14.3,3" fill="none" stroke="#1a7d1a" stroke-width="4.4" stroke-linecap="round" stroke-linejoin="round"/><path d="M3.2,6.8 L7,10.3 L14.3,3" fill="none" stroke="#38b834" stroke-width="2.8" stroke-linecap="round" stroke-linejoin="round"/></svg>
  <div class="cb" style="left:493px;top:355px"></div>
  <div class="cb" style="left:572px;top:355px"></div>
  <div class="cb" style="left:651px;top:355px"></div>
  <div class="cb" style="left:730px;top:355px"></div>
  <div class="abs" style="left:0;top:373px;width:777px;height:24px;background:#fafafa;border-bottom:1px solid #e8e8e8"></div>
  <span class="t" style="left:7px;top:377px;font-size:11.5px;letter-spacing:0.62px;color:#1d1d1d">Ventola CPU riavviata</span>
  <div class="cb" style="left:414px;top:379px"></div>
  <svg class="abs" style="left:413px;top:377px" width="18" height="15" viewBox="0 0 18 15"><path d="M3.2,6.8 L7,10.3 L14.3,3" fill="none" stroke="#1a7d1a" stroke-width="4.4" stroke-linecap="round" stroke-linejoin="round"/><path d="M3.2,6.8 L7,10.3 L14.3,3" fill="none" stroke="#38b834" stroke-width="2.8" stroke-linecap="round" stroke-linejoin="round"/></svg>
  <div class="cb" style="left:493px;top:379px"></div>
  <div class="cb" style="left:572px;top:379px"></div>
  <div class="cb" style="left:651px;top:379px"></div>
  <div class="cb" style="left:730px;top:379px"></div>
  <div class="abs" style="left:0;top:397px;width:777px;height:24px;background:#f2f2f2;border-bottom:1px solid #e8e8e8"></div>
  <span class="t" style="left:7px;top:401px;font-size:11.5px;letter-spacing:0.62px;color:#1d1d1d">Ventola CPU arrestata</span>
  <div class="cb" style="left:414px;top:403px"></div>
  <svg class="abs" style="left:413px;top:401px" width="18" height="15" viewBox="0 0 18 15"><path d="M3.2,6.8 L7,10.3 L14.3,3" fill="none" stroke="#1a7d1a" stroke-width="4.4" stroke-linecap="round" stroke-linejoin="round"/><path d="M3.2,6.8 L7,10.3 L14.3,3" fill="none" stroke="#38b834" stroke-width="2.8" stroke-linecap="round" stroke-linejoin="round"/></svg>
  <div class="cb" style="left:493px;top:403px"></div>
  <svg class="abs" style="left:492px;top:401px" width="18" height="15" viewBox="0 0 18 15"><path d="M3.2,6.8 L7,10.3 L14.3,3" fill="none" stroke="#1a7d1a" stroke-width="4.4" stroke-linecap="round" stroke-linejoin="round"/><path d="M3.2,6.8 L7,10.3 L14.3,3" fill="none" stroke="#38b834" stroke-width="2.8" stroke-linecap="round" stroke-linejoin="round"/></svg>
  <div class="cb" style="left:572px;top:403px"></div>
  <svg class="abs" style="left:571px;top:401px" width="18" height="15" viewBox="0 0 18 15"><path d="M3.2,6.8 L7,10.3 L14.3,3" fill="none" stroke="#1a7d1a" stroke-width="4.4" stroke-linecap="round" stroke-linejoin="round"/><path d="M3.2,6.8 L7,10.3 L14.3,3" fill="none" stroke="#38b834" stroke-width="2.8" stroke-linecap="round" stroke-linejoin="round"/></svg>
  <div class="cb" style="left:651px;top:403px"></div>
  <svg class="abs" style="left:650px;top:401px" width="18" height="15" viewBox="0 0 18 15"><path d="M3.2,6.8 L7,10.3 L14.3,3" fill="none" stroke="#1a7d1a" stroke-width="4.4" stroke-linecap="round" stroke-linejoin="round"/><path d="M3.2,6.8 L7,10.3 L14.3,3" fill="none" stroke="#38b834" stroke-width="2.8" stroke-linecap="round" stroke-linejoin="round"/></svg>
  <div class="cb" style="left:730px;top:403px"></div>
  <svg class="abs" style="left:729px;top:401px" width="18" height="15" viewBox="0 0 18 15"><path d="M3.2,6.8 L7,10.3 L14.3,3" fill="none" stroke="#1a7d1a" stroke-width="4.4" stroke-linecap="round" stroke-linejoin="round"/><path d="M3.2,6.8 L7,10.3 L14.3,3" fill="none" stroke="#38b834" stroke-width="2.8" stroke-linecap="round" stroke-linejoin="round"/></svg>
  <div class="abs" style="left:780px;top:58px;width:16px;height:361px;background:linear-gradient(90deg,#eaeaea,#f3f3f3)"></div>
  <svg class="abs" style="left:784px;top:64px" width="9" height="5" viewBox="0 0 9 5"><path d="M0.5,4.5 L4.5,0.5 L8.5,4.5 Z" fill="#333"/></svg>
  <svg class="abs" style="left:784px;top:407px" width="9" height="5" viewBox="0 0 9 5"><path d="M0.5,0.5 L4.5,4.5 L8.5,0.5 Z" fill="#333"/></svg>
  <div class="abs" style="left:780px;top:285px;width:14px;height:68px;border:1px solid #8f8f8f;border-radius:2px;background:linear-gradient(90deg,#f4f4f4,#e2e2e2 60%,#c9c9c9)"><div class="abs" style="left:3px;top:29px;width:6px;height:1px;background:#666;box-shadow:0 3px 0 #666,0 6px 0 #666"></div></div>
 </div>
 <span class="t" style="left:39px;top:529px;font-size:11.5px;letter-spacing:0.6px;color:#1a1a1a">&Egrave; possibile cambiare l&rsquo;impostazione della lingua di notifica in <span style="color:#1a2d92">Opzioni regionali</span>.</span>
</div>
<div class="panel">
 <div class="abs" style="left:0;top:0;width:339px;height:757px;background:linear-gradient(115deg,rgba(255,255,255,0) 55%,rgba(255,255,255,.35) 62%,rgba(255,255,255,0) 70%)"></div>
 <!-- W1 -->
 <svg class="abs" style="left:18px;top:17px" width="26" height="28" viewBox="0 0 26 28">
  <defs><linearGradient id="shg" x1="0" y1="0" x2="1" y2="1"><stop offset="0" stop-color="#777"/><stop offset="1" stop-color="#111"/></linearGradient></defs>
  <path d="M13,1.5 Q20,1.5 24.5,4.5 Q25,17 13,26.5 Q1,17 1.5,4.5 Q6,1.5 13,1.5 Z" fill="url(#shg)" stroke="#222" stroke-width="1"/>
  <path d="M3.5,6 Q13,1 22.5,6" fill="none" stroke="#fff" stroke-width="1.3"/>
  <path d="M10.8,8 h4.4 v4.5 h4.5 v4.4 h-4.5 v4.5 h-4.4 v-4.5 h-4.5 v-4.4 h4.5 Z" fill="#fff"/>
 </svg>
 <div class="whd t" style="top:22px">Stato del sistema</div>
 <div class="wbox" style="top:51px;height:137px">
  <div class="abs" style="left:23px;top:38px;width:58px;height:58px;border-radius:50%;background:#26b225;box-shadow:0 0 4px 2px rgba(140,230,140,.55)">
   <div class="abs" style="left:6px;top:5px;width:46px;height:47px;border-radius:50%;background:linear-gradient(to bottom,#9edf96 0%,#47be3f 45%,#36b530 62%,#5ec756 100%)"></div>
  </div>
  <svg class="abs" style="left:29px;top:49px" width="46" height="36" viewBox="0 0 46 36"><path d="M8,17 L20,28.6 L39.7,7.8" fill="none" stroke="#fff" stroke-width="6"/></svg>
  <div class="t" style="left:109px;top:25px;font-size:17px;letter-spacing:0.3px;color:#2f9e2f">Buono</div>
  <div class="t" style="left:109px;top:48px;font-size:12px;line-height:14px;letter-spacing:0.92px;color:#555">DiskStation funziona<br>correttamente.</div>
  <div class="t" style="left:109px;top:110px;font-size:12px;letter-spacing:1.12px;color:#1a1a1a">Tempo di attivit&agrave;: 00:35:23</div>
 </div>
 <!-- W2 -->
 <svg class="abs" style="left:18px;top:201px" width="28" height="22" viewBox="0 0 28 22">
  <path d="M1.5,1 V20.5 H27" fill="none" stroke="#222" stroke-width="1.6"/>
  <rect x="5" y="5" width="5" height="15" rx="1" fill="#333"/><rect x="11" y="12" width="5" height="8" rx="1" fill="#333"/><rect x="17" y="14" width="4" height="6" rx="1" fill="#333"/><rect x="22" y="11" width="4" height="9" rx="1" fill="#333"/>
 </svg>
 <div class="whd t" style="top:202px">Controllo risorse</div>
 <div class="wbox" style="top:231px;height:136px">
  <div class="abs" style="left:21px;top:12px;width:25px;height:91px;background:#0f2a44;border:2px solid #0a1420;
   background-image:repeating-linear-gradient(to bottom,#163a5a 0,#163a5a 7px,#3f5b75 7px,#3f5b75 8px,#163a5a 8px,#163a5a 9px)"><div class="abs" style="left:0;top:0;width:21px;height:87px;background:rgba(255,255,255,.09);clip-path:polygon(0 0,100% 0,100% 8%,0 92%)"></div></div>
  <div class="abs" style="left:23px;top:99px;width:21px;height:3px;background:#3aa0e8"></div>
  <div class="abs" style="left:62px;top:12px;width:25px;height:91px;background:#0f2a44;border:2px solid #0a1420;
   background-image:repeating-linear-gradient(to bottom,#163a5a 0,#163a5a 7px,#3f5b75 7px,#3f5b75 8px,#163a5a 8px,#163a5a 9px)"><div class="abs" style="left:0;top:0;width:21px;height:87px;background:rgba(255,255,255,.09);clip-path:polygon(0 0,100% 0,100% 8%,0 92%)"></div></div>
  <div class="abs" style="left:64px;top:98px;width:21px;height:4px;background:#3aa0e8"></div>
  <div class="t" style="left:21px;top:110px;font-size:12px;letter-spacing:0.3px;color:#222">CPU</div>
  <div class="t" style="left:62px;top:110px;font-size:12px;letter-spacing:0.3px;color:#222">RAM</div>
  <div class="abs" style="left:100px;top:8px;width:38px;text-align:right;font-size:10.5px;line-height:17.6px;color:#555">100<br>80<br>60<br>40<br>20<br>0</div>
  <div class="abs" style="left:139px;top:14px;width:145px;height:92px;border:2px solid #505560;background:linear-gradient(157deg,#456e90 0%,#2a5074 36%,#12324f 44%,#0f2d4b 100%)">
   <svg class="abs" style="left:0;top:78px" width="141" height="10" viewBox="0 0 141 10"><path d="M0,5.5 L12,6 L22,7 L40,6 L48,5 L58,4 L64,6.5 L80,6 L100,6.5 L114,5 L124,6.5 L132,5 L141,6 L141,10 L0,10 Z" fill="#2ea3e6"/><path d="M16,8 L26,6.8 L34,8 Z M40,8 L46,6 L52,8 Z M136,8 L139,7 L141,8 Z" fill="#35d335"/></svg>
  </div>
  <svg class="abs" style="left:290px;top:53px" width="10" height="14" viewBox="0 0 10 14"><path d="M2,1.5 L7.5,7 L2,12.5" fill="none" stroke="#333" stroke-width="2.6"/></svg>
  <svg class="abs" style="left:136px;top:111px" width="11" height="12" viewBox="0 0 11 12"><path d="M5.5,0.5 L10.5,5.5 L7.5,5.5 L7.5,11.5 L3.5,11.5 L3.5,5.5 L0.5,5.5 Z" fill="#2d9be8" stroke="#1a6fb0" stroke-width=".6"/></svg>
  <div class="t" style="left:147px;top:110px;font-size:11.5px;letter-spacing:0.4px;color:#222">0 KB/s</div>
  <svg class="abs" style="left:186px;top:111px" width="11" height="12" viewBox="0 0 11 12"><path d="M5.5,11.5 L10.5,6.5 L7.5,6.5 L7.5,0.5 L3.5,0.5 L3.5,6.5 L0.5,6.5 Z" fill="#3cc83c" stroke="#1f8a1f" stroke-width=".6"/></svg>
  <div class="t" style="left:198px;top:110px;font-size:11.5px;letter-spacing:0.4px;color:#222">1 KB/s</div>
 </div>
 <!-- W3 -->
 <svg class="abs" style="left:19px;top:376px" width="24" height="28" viewBox="0 0 24 28">
  <path d="M2,2 H15 L22,9 V26 H2 Z" fill="#fff" stroke="#111" stroke-width="2.6" stroke-linejoin="round"/>
  <path d="M15,2 V9 H22" fill="none" stroke="#111" stroke-width="2"/>
  <path d="M6,9 h5 M6,13 h6 M6,17.5 h12 M6,21.5 h12" stroke="#111" stroke-width="1.8"/>
 </svg>
 <div class="whd t" style="top:382px">Registri recenti</div>
 <div class="wbox" style="top:411px;height:136px">
  <svg class="abs" style="left:22px;top:32px" width="14" height="9" viewBox="0 0 14 9"><path d="M2,7.5 L7,2.5 L12,7.5" fill="none" stroke="#aaa" stroke-width="2.4"/></svg>
  <div class="t" style="left:19px;top:56px;font-size:11.5px;color:#222">1/5</div>
  <svg class="abs" style="left:22px;top:82px" width="14" height="9" viewBox="0 0 14 9"><path d="M2,1.5 L7,6.5 L12,1.5" fill="none" stroke="#333" stroke-width="2.6"/></svg>
  <div class="abs" style="left:54px;top:8px;width:253px;height:120px;background:#eceef3"></div>
  <div class="abs" style="left:54px;top:32px;width:253px;height:24px;background:#dcdfe7"></div>
  <div class="abs" style="left:54px;top:80px;width:253px;height:24px;background:#dcdfe7"></div>
  <div class="abs" style="left:61px;top:14px;width:13px;height:13px;border-radius:50%;background:radial-gradient(circle at 40% 35%,#8cc4f5,#2f7fd6 70%,#1d5fb0);"><span class="t" style="left:4.5px;top:0px;font:bold 10px/13px Liberation Sans;color:#fff">i</span></div>
  <div class="t" style="left:89px;top:12px;font-size:11.5px;letter-spacing:0.65px;color:#222">SSH service was started.</div>
  <div class="abs" style="left:61px;top:38px;width:13px;height:13px;border-radius:50%;background:radial-gradient(circle at 40% 35%,#8cc4f5,#2f7fd6 70%,#1d5fb0);"><span class="t" style="left:4.5px;top:0px;font:bold 10px/13px Liberation Sans;color:#fff">i</span></div>
  <div class="t" style="left:89px;top:36px;font-size:11.5px;letter-spacing:0.65px;color:#222">Telnet service was started.</div>
  <div class="abs" style="left:61px;top:62px;width:13px;height:13px;border-radius:50%;background:radial-gradient(circle at 40% 35%,#8cc4f5,#2f7fd6 70%,#1d5fb0);"><span class="t" style="left:4.5px;top:0px;font:bold 10px/13px Liberation Sans;color:#fff">i</span></div>
  <div class="t" style="left:89px;top:60px;font-size:11.5px;letter-spacing:0.65px;color:#222">System successfully started Mysql...</div>
  <div class="abs" style="left:61px;top:86px;width:13px;height:13px;border-radius:50%;background:radial-gradient(circle at 40% 35%,#8cc4f5,#2f7fd6 70%,#1d5fb0);"><span class="t" style="left:4.5px;top:0px;font:bold 10px/13px Liberation Sans;color:#fff">i</span></div>
  <div class="t" style="left:89px;top:84px;font-size:11.5px;letter-spacing:0.65px;color:#222">System successfully started Web S...</div>
  <div class="abs" style="left:61px;top:110px;width:13px;height:13px;border-radius:50%;background:radial-gradient(circle at 40% 35%,#8cc4f5,#2f7fd6 70%,#1d5fb0);"><span class="t" style="left:4.5px;top:0px;font:bold 10px/13px Liberation Sans;color:#fff">i</span></div>
  <div class="t" style="left:89px;top:108px;font-size:11.5px;letter-spacing:0.65px;color:#222">System successfully started Web S...</div>
 </div>
 <!-- W4 -->
 <svg class="abs" style="left:19px;top:561px" width="26" height="26" viewBox="0 0 26 26">
  <rect x="1.5" y="3" width="13" height="7.5" rx="3.7" transform="rotate(40 8 6.7)" fill="none" stroke="#222" stroke-width="2.6"/>
  <rect x="10.5" y="14.5" width="13" height="7.5" rx="3.7" transform="rotate(40 17 18.2)" fill="none" stroke="#222" stroke-width="2.6"/>
 </svg>
 <div class="whd t" style="top:562px">Connessioni correnti</div>
 <div class="wbox" style="top:591px;height:137px">
  <svg class="abs" style="left:22px;top:32px" width="14" height="9" viewBox="0 0 14 9"><path d="M2,7.5 L7,2.5 L12,7.5" fill="none" stroke="#aaa" stroke-width="2.4"/></svg>
  <div class="t" style="left:19px;top:56px;font-size:11.5px;color:#222">1/1</div>
  <svg class="abs" style="left:22px;top:82px" width="14" height="9" viewBox="0 0 14 9"><path d="M2,1.5 L7,6.5 L12,1.5" fill="none" stroke="#aaa" stroke-width="2.4"/></svg>
  <div class="abs" style="left:54px;top:31px;width:253px;height:97px;background:#fff"></div>
  <svg class="abs" style="left:62px;top:12px" width="13" height="13" viewBox="0 0 13 13"><circle cx="6.5" cy="4" r="3.2" fill="#444"/><path d="M0.5,13 Q1,8 5,7.5 L8,7.5 Q12,8 12.5,13 Z" fill="#444"/></svg>
  <div class="t" style="left:78px;top:11px;font-size:11.5px;letter-spacing:0.5px;color:#222">admin</div>
  <div class="t" style="left:125px;top:11px;font-size:11.5px;letter-spacing:0.5px;color:#222">HTTP</div>
  <div class="t" style="left:179px;top:11px;font-size:11.5px;letter-spacing:0.5px;color:#222">00:27:27</div>
  <svg class="abs" style="left:282px;top:12px" width="17" height="12" viewBox="0 0 17 12"><path d="M1,10 L5,6 L4,4 L8,2 L10,4 L7,8 L5,7 L2,11 Z" fill="#333"/><circle cx="13" cy="8" r="3" fill="none" stroke="#d33" stroke-width="1.4"/><path d="M11,6 L15,10" stroke="#d33" stroke-width="1.2"/></svg>
 </div>
 <!-- bottom tab -->
 <svg class="abs" style="left:264px;top:736px" width="76" height="22" viewBox="0 0 76 22"><path d="M0,24 L20,3 Q22,1 26,1 L76,1 L76,24 Z" fill="#f3f5f8" stroke="#b9bec8" stroke-width="1"/><path d="M42,8.5 L48,13.5 L54,8.5" fill="none" stroke="#333" stroke-width="3"/></svg>
</div>
<!-- Synology logo -->
<div class="t" style="left:873px;top:908px;font-size:22px;font-weight:bold;letter-spacing:-1.2px;color:#fff;text-shadow:0 1px 1px rgba(0,0,0,.25)">Syno<span style="font-family:'Liberation Serif',serif;font-weight:normal;letter-spacing:-0.5px">logy</span></div>
<div class="t" style="left:970px;top:912px;font-size:19px;letter-spacing:0.6px;color:#c8ccd2;text-shadow:0 1px 1px rgba(0,0,0,.45),0 -1px 0 rgba(255,255,255,.5)">DSM 4.1</div>
<!-- watermark -->
<div class="abs" style="left:1640px;top:897px;width:54px;height:50px;transform:rotate(12deg);border-radius:6px;background:linear-gradient(135deg,rgba(230,236,250,.7),rgba(130,150,220,.6));box-shadow:0 0 2px rgba(80,100,160,.5)">
 <svg class="abs" style="left:9px;top:8px" width="36" height="34" viewBox="0 0 36 34"><path d="M6,4 L30,30 M30,4 L6,30" stroke="#fff" stroke-opacity=".85" stroke-width="7" stroke-linecap="round"/></svg>
</div>
<div class="t" style="left:1703px;top:910px;font-size:26px;letter-spacing:-0.8px;color:rgba(95,120,175,.55);transform:scaleX(0.78);transform-origin:0 0">xtremehardware.com</div>
<div class="abs" style="left:0;top:958px;width:1920px;height:1px;background:#848b99"></div>
</body></html>
